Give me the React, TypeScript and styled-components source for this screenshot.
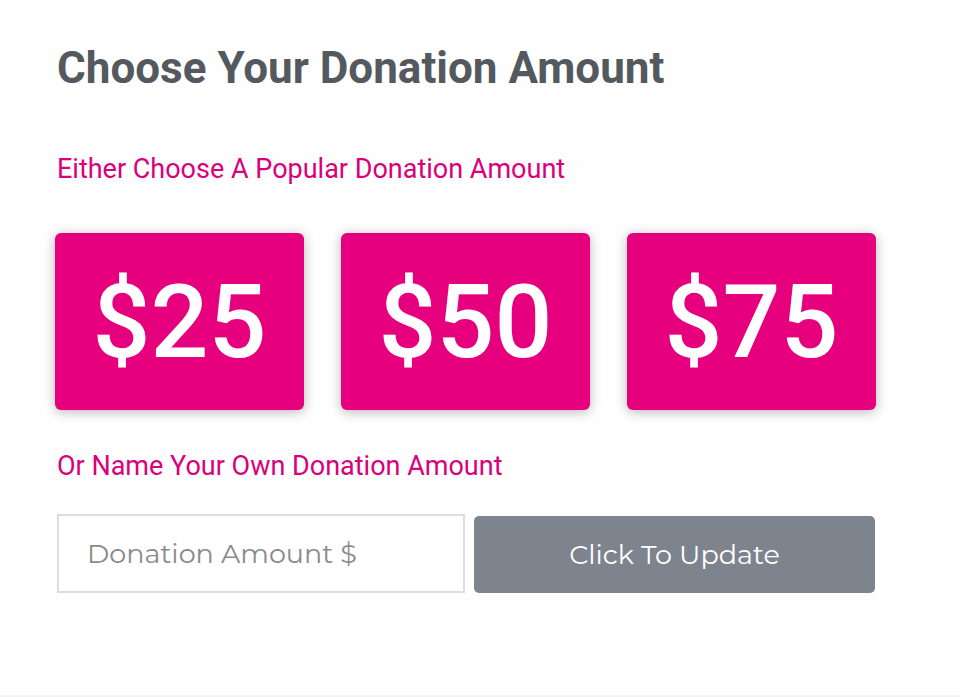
import React from "react";
import styled, { createGlobalStyle } from "styled-components";

const Global = createGlobalStyle`
  html, body { margin: 0; padding: 0; background: #fefefe; }
  body { font-family: Roboto, "Liberation Sans", sans-serif; }
`;

const Page = styled.div`
  box-sizing: border-box;
  height: 697px;
  padding: 42px 0 0 57px;
  border-bottom: 2px solid #f3f3f3;
`;

const Title = styled.h1`
  margin: 0;
  font-family: Roboto, sans-serif;
  font-weight: 700;
  font-size: 44px;
  line-height: 53px;
  color: #54595f;
`;

const Label = styled.p<{ $top: number }>`
  margin: ${(p) => p.$top}px 0 0;
  font-family: Roboto, sans-serif;
  font-weight: 400;
  font-size: 27px;
  line-height: 34px;
  color: #d9007c;
`;

const Amounts = styled.div`
  display: flex;
  gap: 37px;
  margin: 47px 0 0 -2px;
`;

const AmountCard = styled.button`
  width: 249px;
  height: 177px;
  border: none;
  border-radius: 6px;
  background: #e6007e;
  color: #fff;
  font-family: Roboto, sans-serif;
  font-weight: 500;
  font-size: 102px;
  line-height: 1;
  display: flex;
  align-items: center;
  justify-content: center;
  padding: 0;
  box-shadow: 0 2px 12px rgba(0, 0, 0, 0.28);
  cursor: pointer;
`;

const FormRow = styled.div`
  display: flex;
  align-items: flex-start;
  gap: 9px;
  margin-top: 31px;
`;

const AmountInput = styled.input`
  width: 408px;
  height: 79px;
  box-sizing: border-box;
  border: 2px solid #dddddd;
  background: #fff;
  padding: 0 0 0 28px;
  font-family: Montserrat, "Open Sans", sans-serif;
  font-size: 27px;
  color: #555;
  outline: none;
  &::placeholder { color: #8a8a8a; }
`;

const UpdateButton = styled.button`
  width: 401px;
  height: 77px;
  margin-top: 2px;
  border: none;
  border-radius: 5px;
  background: #7d848d;
  color: #fff;
  font-family: Montserrat, "Open Sans", sans-serif;
  font-size: 27px;
  cursor: pointer;
`;

export default function App() {
  return (
    <>
      <Global />
      <Page>
        <Title>Choose Your Donation Amount</Title>
        <Label $top={57}>Either Choose A Popular Donation Amount</Label>
        <Amounts>
          {["$25", "$50", "$75"].map((a) => (
            <AmountCard key={a}>{a}</AmountCard>
          ))}
        </Amounts>
        <Label $top={39}>Or Name Your Own Donation Amount</Label>
        <FormRow>
          <AmountInput placeholder="Donation Amount $" />
          <UpdateButton>Click To Update</UpdateButton>
        </FormRow>
      </Page>
    </>
  );
}
